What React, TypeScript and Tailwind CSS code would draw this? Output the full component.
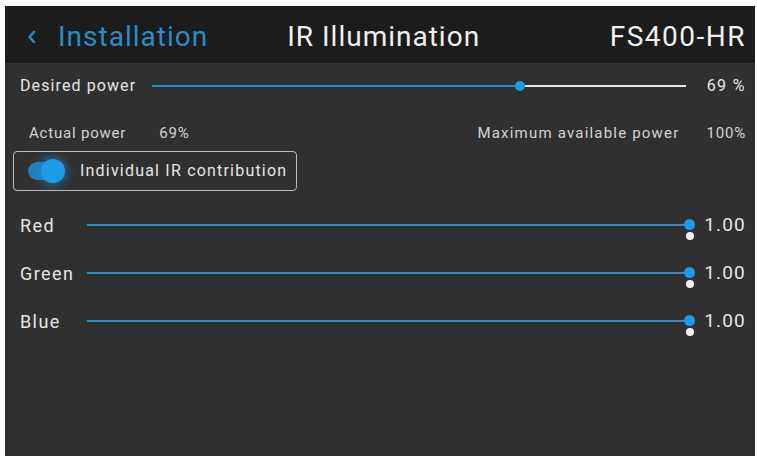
import React from 'react'

const font = { fontFamily: 'Roboto, "Noto Sans", sans-serif' }

const ColorRow: React.FC<{ label: string }> = ({ label }) => (
  <div className="flex items-center h-[48px]">
    <span className="w-[82px] pl-[15px] text-[18px] tracking-[1.4px] text-[#e6e6e6]">{label}</span>
    <div className="relative flex-1 h-[2px] bg-[#2a8cc6]">
      <span className="absolute right-[-5px] top-[-5px] w-[11px] h-[11px] rounded-full bg-[#1c9ce6]" />
      <span className="absolute right-[-4px] top-[8px] w-[8px] h-[8px] rounded-full bg-[#f2f2f2]" />
    </div>
    <span className="w-[65px] text-right pr-[9px] text-[19px] tracking-[1.2px] text-[#e6e6e6]">1.00</span>
  </div>
)

const App: React.FC = () => {
  return (
    <div className="w-[757px] h-[456px] bg-white pt-[6px] pl-[5px] pr-[2px]" style={font}>
      <div className="h-full flex flex-col bg-[#303030]">
        {/* Header */}
        <div className="h-[57px] bg-[#1c1c1c] flex items-center pt-[4px] pl-[21px] pr-[9px]">
          <svg width="12" height="16" viewBox="0 0 12 16" className="mr-[20px]">
            <path d="M8 3 L3.5 8 L8 13" stroke="#2a8cc6" strokeWidth="2.6" fill="none" strokeLinecap="round" strokeLinejoin="round" />
          </svg>
          <span className="text-[28px] tracking-[1px] text-[#2a8cc6]">Installation</span>
          <span className="ml-[79px] text-[28px] tracking-[1px] text-[#f0f0f0]">IR Illumination</span>
          <span className="ml-auto text-[28px] tracking-[1.5px] text-[#f0f0f0]">FS400-HR</span>
        </div>

        {/* Desired power */}
        <div className="flex items-center h-[46px]">
          <span className="w-[147px] pl-[15px] text-[16px] tracking-[1.1px] text-[#e6e6e6]">Desired power</span>
          <div className="w-[534px] flex items-center">
            <div className="w-[368px] h-[2px] bg-[#2a8cc6] relative">
              <span className="absolute right-[-5px] top-[-4px] w-[10px] h-[10px] rounded-full bg-[#1c9ce6]" />
            </div>
            <div className="flex-1 h-[2px] bg-[#e8e8e8]" />
          </div>
          <span className="flex-1 pr-[9px] text-right text-[16px] tracking-[1.4px] text-[#e6e6e6]">69 %</span>
        </div>

        {/* Actual power */}
        <div className="flex items-center h-[20px] mt-[14px] text-[15px] tracking-[0.8px] text-[#d4d4d4]">
          <span className="pl-[24px]">Actual power</span>
          <span className="ml-[33px]">69%</span>
          <span className="ml-auto tracking-[1.2px]">Maximum available power</span>
          <span className="ml-[27px] pr-[9px]">100%</span>
        </div>

        {/* Toggle */}
        <div className="pl-[8px] mt-[8px]">
          <div className="w-[284px] h-[40px] border border-[#bdbdbd] rounded-[4px] flex items-center pl-[14px]">
            <div className="relative w-[34px] h-[18px] rounded-full bg-[#1f7fb8]">
              <span className="absolute right-[-3px] top-[-3px] w-[24px] h-[24px] rounded-full bg-[#1c9ce6] shadow-[0_0_8px_3px_rgba(28,156,230,0.45)]" />
            </div>
            <span className="ml-[18px] text-[16px] tracking-[1.2px] text-[#e6e6e6]">Individual IR contribution</span>
          </div>
        </div>

        {/* Color sliders */}
        <div className="mt-[10px]">
          <ColorRow label="Red" />
          <ColorRow label="Green" />
          <ColorRow label="Blue" />
        </div>
      </div>
    </div>
  )
}

export default App
